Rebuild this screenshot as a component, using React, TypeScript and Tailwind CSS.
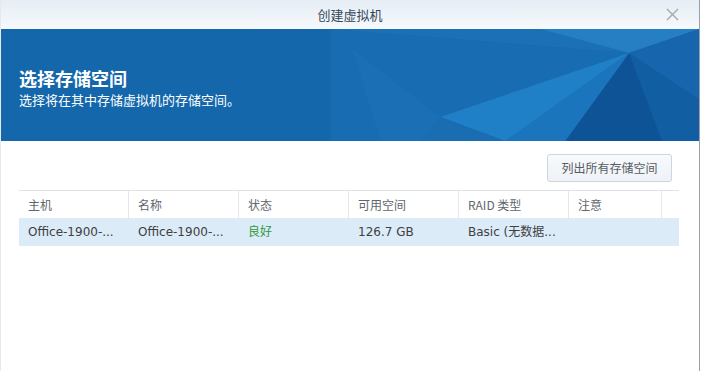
const columns = [
  { label: "主机", width: "w-[110px]" },
  { label: "名称", width: "w-[110px]" },
  { label: "状态", width: "w-[110px]" },
  { label: "可用空间", width: "w-[110px]" },
  { label: "RAID 类型", width: "w-[110px]" },
  { label: "注意", width: "w-[93px]" },
];

const row = [
  { text: "Office-1900-...", cls: "text-[#404040]" },
  { text: "Office-1900-...", cls: "text-[#404040]" },
  { text: "良好", cls: "text-[#2e9a3a]" },
  { text: "126.7 GB", cls: "text-[#404040]" },
  { text: "Basic (无数据...", cls: "text-[#404040]" },
  { text: "", cls: "" },
];

const Facets = () => (
  <svg className="absolute inset-0 h-full w-full" viewBox="0 0 699 112" preserveAspectRatio="none">
    <polygon points="330,0 629,24 505,112 330,112" fill="#186cb1" />
    <polygon points="0,0 330,0 330,112 0,112" fill="#1467ab" />
    <polygon points="330,0 540,0 629,24" fill="#1b70b6" />
    <polygon points="540,0 699,0 629,24" fill="#267fc3" />
    <polygon points="629,24 699,0 699,70" fill="#1766ad" />
    <polygon points="629,24 699,70 699,112 662,112" fill="#115ea3" />
    <polygon points="629,24 662,112 565,112" fill="#0d5396" />
    <polygon points="629,24 565,112 505,112" fill="#1a75bd" />
    <polygon points="440,88 629,24 505,112" fill="#1f80c8" />
    <polygon points="420,112 440,88 505,112" fill="#1b6db2" />
    <polygon points="352,20 440,88 420,112 380,112" fill="#1a6fb5" />
  </svg>
);

export default function App() {
  return (
    <div className="h-[371px] w-[704px] bg-white font-['Noto_Sans_CJK_SC',sans-serif]">
      <div className="flex h-[371px] w-[700px] flex-col border-l border-r border-l-[#e6e9ec] border-r-[#9aa0a6] bg-white">
        <div className="relative flex h-[29px] items-center justify-center bg-gradient-to-b from-[#e6edf5] to-[#f6f9fc]">
          <span className="text-[13px] text-[#34475c]">创建虚拟机</span>
          <svg className="absolute right-[20px] top-[8px]" width="13" height="13" viewBox="0 0 13 13">
            <path d="M1 1 L12 12 M12 1 L1 12" stroke="#a4a9ae" strokeWidth="1.4" />
          </svg>
        </div>

        <div className="relative h-[112px] overflow-hidden bg-[#1467ab]">
          <Facets />
          <div className="relative flex flex-col pl-[18px] pt-[36px] text-white">
            <h1 className="text-[18px] font-bold leading-[26px]">选择存储空间</h1>
            <p className="text-[13px] leading-[18px]">选择将在其中存储虚拟机的存储空间。</p>
          </div>
        </div>

        <div className="flex flex-col px-[18px] pt-[13px]">
          <div className="flex justify-end pr-[9px]">
            <button className="h-[28px] w-[125px] rounded-[3px] border border-[#cdd5de] bg-gradient-to-b from-[#f8fafc] to-[#eef2f6] text-[12px] text-[#555c63]">
              列出所有存储空间
            </button>
          </div>

          <div className="mt-[8px] w-[660px] border-t border-[#dde3ea]">
            <div className="flex h-[27px]">
              {columns.map((c) => (
                <div
                  key={c.label}
                  className={`${c.width} flex items-center border-r border-[#e3e7eb] pl-[9px] text-[12px] text-[#60666d]`}
                >
                  {c.label}
                </div>
              ))}
            </div>
            <div className="flex h-[28px] bg-[#dcebf8]">
              {row.map((cell, i) => (
                <div
                  key={i}
                  className={`${columns[i].width} flex items-center whitespace-nowrap pl-[9px] text-[12px] font-['DejaVu_Sans','Noto_Sans_CJK_SC',sans-serif] ${cell.cls}`}
                >
                  {cell.text}
                </div>
              ))}
            </div>
          </div>
        </div>
      </div>
    </div>
  );
}
